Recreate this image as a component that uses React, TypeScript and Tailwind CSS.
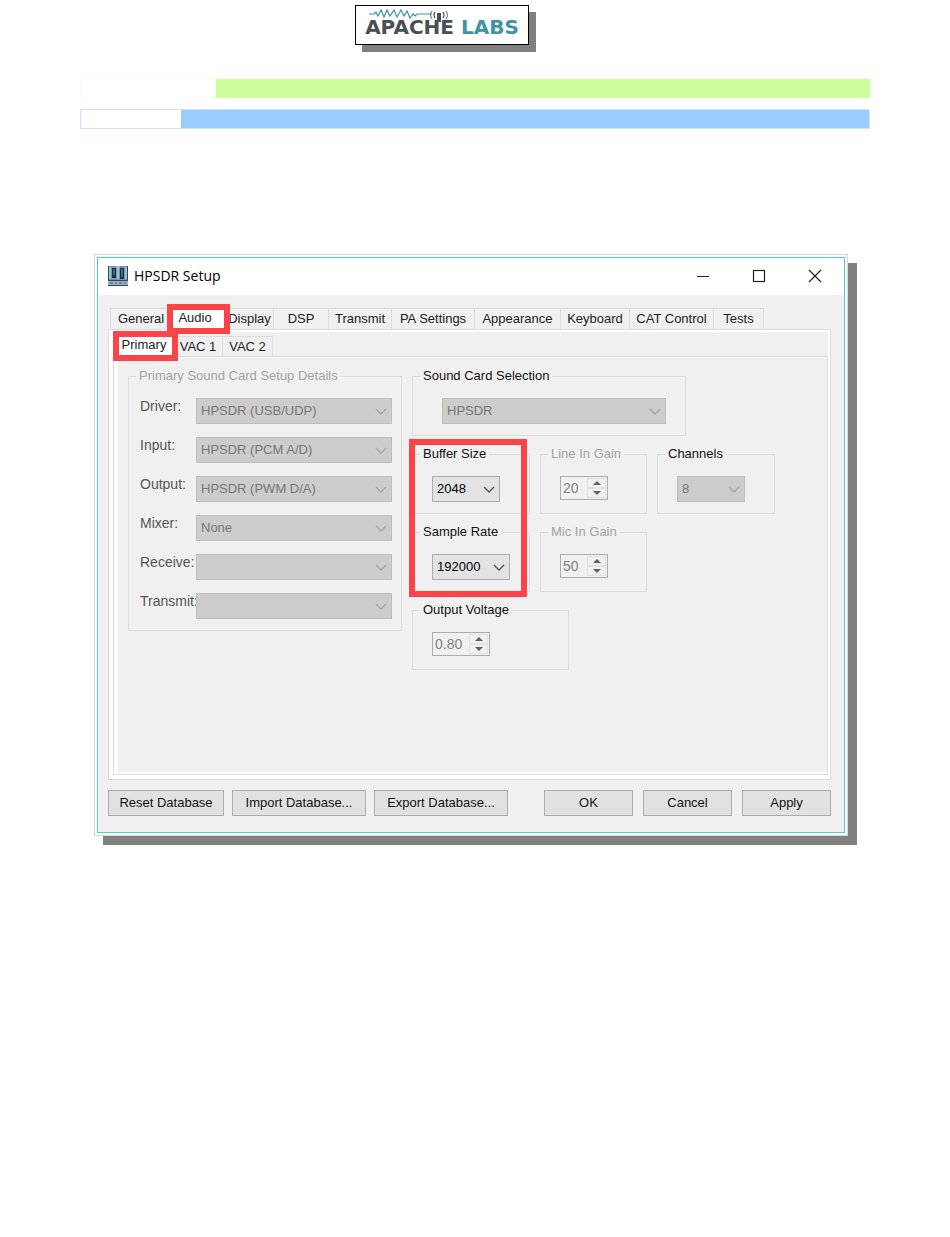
import { useId } from 'react'
import type { ReactNode } from 'react'
import clsx from 'clsx'

const mainTabs = [
  { name: 'General', width: 'w-[62px]' },
  { name: 'Audio', width: 'w-[54px]' },
  { name: 'Display', width: 'w-[48px]' },
  { name: 'DSP', width: 'w-[55px]' },
  { name: 'Transmit', width: 'w-[63px]' },
  { name: 'PA Settings', width: 'w-[83px]' },
  { name: 'Appearance', width: 'w-[86px]' },
  { name: 'Keyboard', width: 'w-[69px]' },
  { name: 'CAT Control', width: 'w-[84px]' },
  { name: 'Tests', width: 'w-[50px]' },
]

const subTabs = [
  { name: 'Primary', width: 'w-[60px]' },
  { name: 'VAC 1', width: 'w-[49px]' },
  { name: 'VAC 2', width: 'w-[50px]' },
]

const cardRows = [
  { label: 'Driver:', value: 'HPSDR (USB/UDP)' },
  { label: 'Input:', value: 'HPSDR (PCM A/D)' },
  { label: 'Output:', value: 'HPSDR (PWM D/A)' },
  { label: 'Mixer:', value: 'None' },
  { label: 'Receive:', value: '' },
  { label: 'Transmit:', value: '' },
]

function Logo() {
  return (
    <div className="h-10 w-[174px] border border-black bg-white shadow-[7px_7px_0_#808080]">
      <svg className="block h-3 w-full overflow-visible" viewBox="0 0 172 12" fill="none">
        <path
          d="M13 8h5l2-2 2 4 3-6 3 7 3-7 3 6 4-6 3 7 4-7 3 6 3-5 3 7 3-4 2 2 2-2h15"
          stroke="#3f93a3"
          strokeWidth="1.2"
        />
        <path d="M83 7v9" stroke="#4a4f55" strokeWidth="4" />
        <path d="M79 6q-2 3 0 6M87 6q2 3 0 6" stroke="#4a4f55" strokeWidth="1.2" />
        <path d="M76 5q-3 4 0 8M90 5q3 4 0 8" stroke="#7f868b" strokeWidth="1.2" />
      </svg>
      <div className="text-center font-['DejaVu_Sans',sans-serif] text-xl leading-[18px] font-bold text-[#4a4f55]">
        APACHE <span className="text-[#3f93a3]">LABS</span>
      </div>
    </div>
  )
}

function AppIcon() {
  return (
    <svg className="size-5" viewBox="0 0 20 20">
      <rect width="20" height="20" fill="#2b4a61" />
      <rect x="1" width="18" height="14" fill="#7396ab" />
      <path d="M4 2h4v10H4zM12 2h4v11h-4z" fill="#1b3143" />
      <path d="M2 1v12M8 1h4M10 1v12M18 1v12" stroke="#c3dae5" strokeWidth="1.2" />
      <path d="M6 3v6M14 3v8" stroke="#6f9cb8" />
      <path d="M0 15h20v4H0z" fill="#9fb1bc" />
      <path d="M2 17h3M7 17h2M11 17h3M16 17h2" stroke="#41596a" />
    </svg>
  )
}

function Marker({ className }: { className: string }) {
  return <span className={clsx('pointer-events-none absolute z-10 border-[6px] border-[#f94449]', className)} />
}

function Combo({
  id,
  value,
  width,
  disabled,
  label,
}: {
  id?: string
  value: string
  width: string
  disabled?: boolean
  label?: string
}) {
  return (
    <div className={clsx('relative', width)}>
      <select
        id={id}
        aria-label={label}
        disabled={disabled}
        defaultValue={value}
        className={clsx(
          'block h-[26px] w-full appearance-none border pl-1 text-[13px] opacity-100',
          disabled ? 'border-[#bfbfbf] bg-[#cccccc] text-[#777777]' : 'border-[#adadad] bg-[#e3e3e3] text-black',
        )}
      >
        <option>{value}</option>
      </select>
      <svg
        className={clsx(
          'pointer-events-none absolute top-[10px] right-[5px] h-[7px] w-3',
          disabled ? 'text-[#a6a6a6]' : 'text-[#555555]',
        )}
        viewBox="0 0 12 7"
        fill="none"
      >
        <path d="M1 1l5 5 5-5" stroke="currentColor" strokeWidth="1.4" />
      </svg>
    </div>
  )
}

function Spinner({ value, width, label }: { value: string; width: string; label: string }) {
  return (
    <div className={clsx('flex h-6 border border-[#adadad] bg-[#f0f0f0] p-px', width)}>
      <input
        type="text"
        inputMode="decimal"
        aria-label={label}
        defaultValue={value}
        disabled
        className="h-5 min-w-0 flex-1 pl-px text-sm text-[#808080]"
      />
      <div className="flex w-[19px] flex-col">
        <button
          type="button"
          disabled
          aria-label={`${label} up`}
          className="flex flex-1 items-center justify-center border border-[#e2e2e2]"
        >
          <svg className="h-1 w-2" viewBox="0 0 8 4">
            <path d="M0 4l4-4 4 4z" fill="#606060" />
          </svg>
        </button>
        <button
          type="button"
          disabled
          aria-label={`${label} down`}
          className="flex flex-1 items-center justify-center border border-[#e2e2e2]"
        >
          <svg className="h-1 w-2" viewBox="0 0 8 4">
            <path d="M0 0l4 4 4-4z" fill="#606060" />
          </svg>
        </button>
      </div>
    </div>
  )
}

function Group({
  title,
  muted,
  className,
  children,
}: {
  title: string
  muted?: boolean
  className: string
  children: ReactNode
}) {
  return (
    <fieldset className={clsx('border border-[#dcdcdc] px-[7px] pt-[14px] pb-[11px]', className)}>
      <legend className={clsx('h-4 px-[3px] leading-4 whitespace-nowrap', muted ? 'text-[#a3a3a3]' : 'text-[#111111]')}>
        {title}
      </legend>
      {children}
    </fieldset>
  )
}

function CardRow({ label, value }: { label: string; value: string }) {
  const id = useId()
  return (
    <div className="flex">
      <label htmlFor={id} className="w-14 text-sm leading-4 whitespace-nowrap text-[#555555]">
        {label}
      </label>
      <Combo id={id} value={value} width="flex-1" disabled />
    </div>
  )
}

function PushButton({ width, children }: { width: string; children: ReactNode }) {
  return (
    <button type="button" className={clsx('h-[26px] border border-[#adadad] bg-[#e1e1e1] text-[#111111]', width)}>
      {children}
    </button>
  )
}

function TitleBar() {
  return (
    <header className="flex h-[37px] items-center bg-white pr-[22px] pb-[2px] pl-[10px]">
      <AppIcon />
      <h1 className="ml-[6px] flex-1 font-['Open_Sans',sans-serif] text-sm text-black">HPSDR Setup</h1>
      <div className="flex gap-[42px] text-[#222222]">
        <button type="button" aria-label="Minimize">
          <svg className="size-[14px]" viewBox="0 0 14 14" stroke="currentColor">
            <path d="M1 7.5h12" />
          </svg>
        </button>
        <button type="button" aria-label="Maximize">
          <svg className="size-[14px]" viewBox="0 0 14 14" fill="none" stroke="currentColor" strokeWidth="1.2">
            <rect x="1.5" y="1.5" width="11" height="11" />
          </svg>
        </button>
        <button type="button" aria-label="Close">
          <svg className="size-[14px]" viewBox="0 0 14 14" fill="none" stroke="currentColor" strokeWidth="1.2">
            <path d="M1 1l12 12M13 1L1 13" />
          </svg>
        </button>
      </div>
    </header>
  )
}

function PrimaryPanel() {
  return (
    <div className="flex gap-[10px] bg-[#f0f0f0] pt-[10px] pb-[102px] pl-[10px]">
      <Group title="Primary Sound Card Setup Details" muted className="w-[274px] self-start">
        <div className="flex flex-col gap-[13px] pr-[2px] pl-1">
          {cardRows.map((row) => (
            <CardRow key={row.label} label={row.label} value={row.value} />
          ))}
        </div>
      </Group>

      <div className="flex flex-col items-start gap-[10px]">
        <Group title="Sound Card Selection" className="w-[274px]">
          <div className="pl-[22px]">
            <Combo value="HPSDR" width="w-[224px]" label="Sound Card Selection" disabled />
          </div>
        </Group>

        <div className="flex gap-[10px]">
          <div className="relative flex flex-col gap-[10px]">
            <Group title="Buffer Size" className="w-[118px]">
              <div className="pl-3">
                <Combo value="2048" width="w-[68px]" label="Buffer Size" />
              </div>
            </Group>
            <Group title="Sample Rate" className="w-[118px]">
              <div className="pl-3">
                <Combo value="192000" width="w-[78px]" label="Sample Rate" />
              </div>
            </Group>
            <Marker className="-top-[7px] right-[3px] -bottom-[5px] -left-[3px]" />
          </div>
          <div className="flex flex-col gap-[10px]">
            <Group title="Line In Gain" muted className="h-[68px] w-[107px]">
              <div className="pl-3">
                <Spinner value="20" width="w-12" label="Line In Gain" />
              </div>
            </Group>
            <Group title="Mic In Gain" muted className="h-[68px] w-[107px]">
              <div className="pl-3">
                <Spinner value="50" width="w-12" label="Mic In Gain" />
              </div>
            </Group>
          </div>
          <Group title="Channels" className="w-[118px] self-start">
            <div className="pl-3">
              <Combo value="8" width="w-[68px]" label="Channels" disabled />
            </div>
          </Group>
        </div>

        <Group title="Output Voltage" className="h-[68px] w-[157px]">
          <div className="pl-3">
            <Spinner value="0.80" width="w-[58px]" label="Output Voltage" />
          </div>
        </Group>
      </div>
    </div>
  )
}

function SetupWindow() {
  return (
    <section className="mt-[125px] mr-[22px] ml-[14px] border border-[#d8d8d8] bg-white p-[2px] text-[13px] shadow-[9px_9px_0_#808080]">
      <div className="border border-[#4fd0c8] bg-[#f0f0f0]">
        <TitleBar />
        <div className="pt-[13px] pr-[13px] pb-4 pl-[10px]">
          <div role="tablist" className="flex items-end pl-[2px]">
            {mainTabs.map((tab) => (
              <button
                key={tab.name}
                type="button"
                role="tab"
                aria-selected={tab.name === 'Audio'}
                className={clsx(
                  'whitespace-nowrap text-[#222222]',
                  tab.width,
                  tab.name === 'Audio'
                    ? 'relative -mt-[2px] h-[23px] bg-white pr-2'
                    : 'h-[21px] border-t border-r border-[#dcdcdc] first:border-l',
                )}
              >
                {tab.name}
                {tab.name === 'Audio' && <Marker className="-top-[2px] -right-1 -bottom-[5px] -left-[5px]" />}
              </button>
            ))}
          </div>

          <div className="border border-[#dcdcdc] bg-white pt-[2px] pr-[2px] pb-1 pl-1">
            <div role="tablist" className="flex h-6 items-end bg-[#f0f0f0] pl-px">
              {subTabs.map((tab) => (
                <button
                  key={tab.name}
                  type="button"
                  role="tab"
                  aria-selected={tab.name === 'Primary'}
                  className={clsx(
                    'whitespace-nowrap text-[#222222]',
                    tab.width,
                    tab.name === 'Primary'
                      ? 'relative h-[22px] bg-white'
                      : 'h-5 border-t border-r border-[#dcdcdc]',
                  )}
                >
                  {tab.name}
                  {tab.name === 'Primary' && <Marker className="-top-[3px] -right-1 -bottom-[5px] -left-px" />}
                </button>
              ))}
            </div>
            <div className="border border-[#dcdcdc] bg-white pt-px pb-[2px] pl-1">
              <PrimaryPanel />
            </div>
          </div>

          <div className="mt-[10px] flex justify-between">
            <div className="flex gap-2">
              <PushButton width="w-[116px]">Reset Database</PushButton>
              <PushButton width="w-[134px]">Import Database...</PushButton>
              <PushButton width="w-[134px]">Export Database...</PushButton>
            </div>
            <div className="flex gap-[10px]">
              <PushButton width="w-[89px]">OK</PushButton>
              <PushButton width="w-[89px]">Cancel</PushButton>
              <PushButton width="w-[89px]">Apply</PushButton>
            </div>
          </div>
        </div>
      </div>
    </section>
  )
}

export default function App() {
  return (
    <main className="min-h-screen bg-white px-20 pt-[5px] pb-20 font-['Liberation_Sans',Arial,sans-serif]">
      <div className="flex justify-center pr-[66px]">
        <Logo />
      </div>
      <div className="mt-[34px] flex h-[19px]">
        <div className="w-[136px] border-t border-l border-[#fafde8]" />
        <div className="flex-1 bg-[#ccff99]" />
      </div>
      <div className="mt-[11px] flex h-5 border border-[#cfe3f7]">
        <div className="w-[100px]" />
        <div className="flex-1 bg-[#99ccff]" />
      </div>
      <SetupWindow />
    </main>
  )
}
